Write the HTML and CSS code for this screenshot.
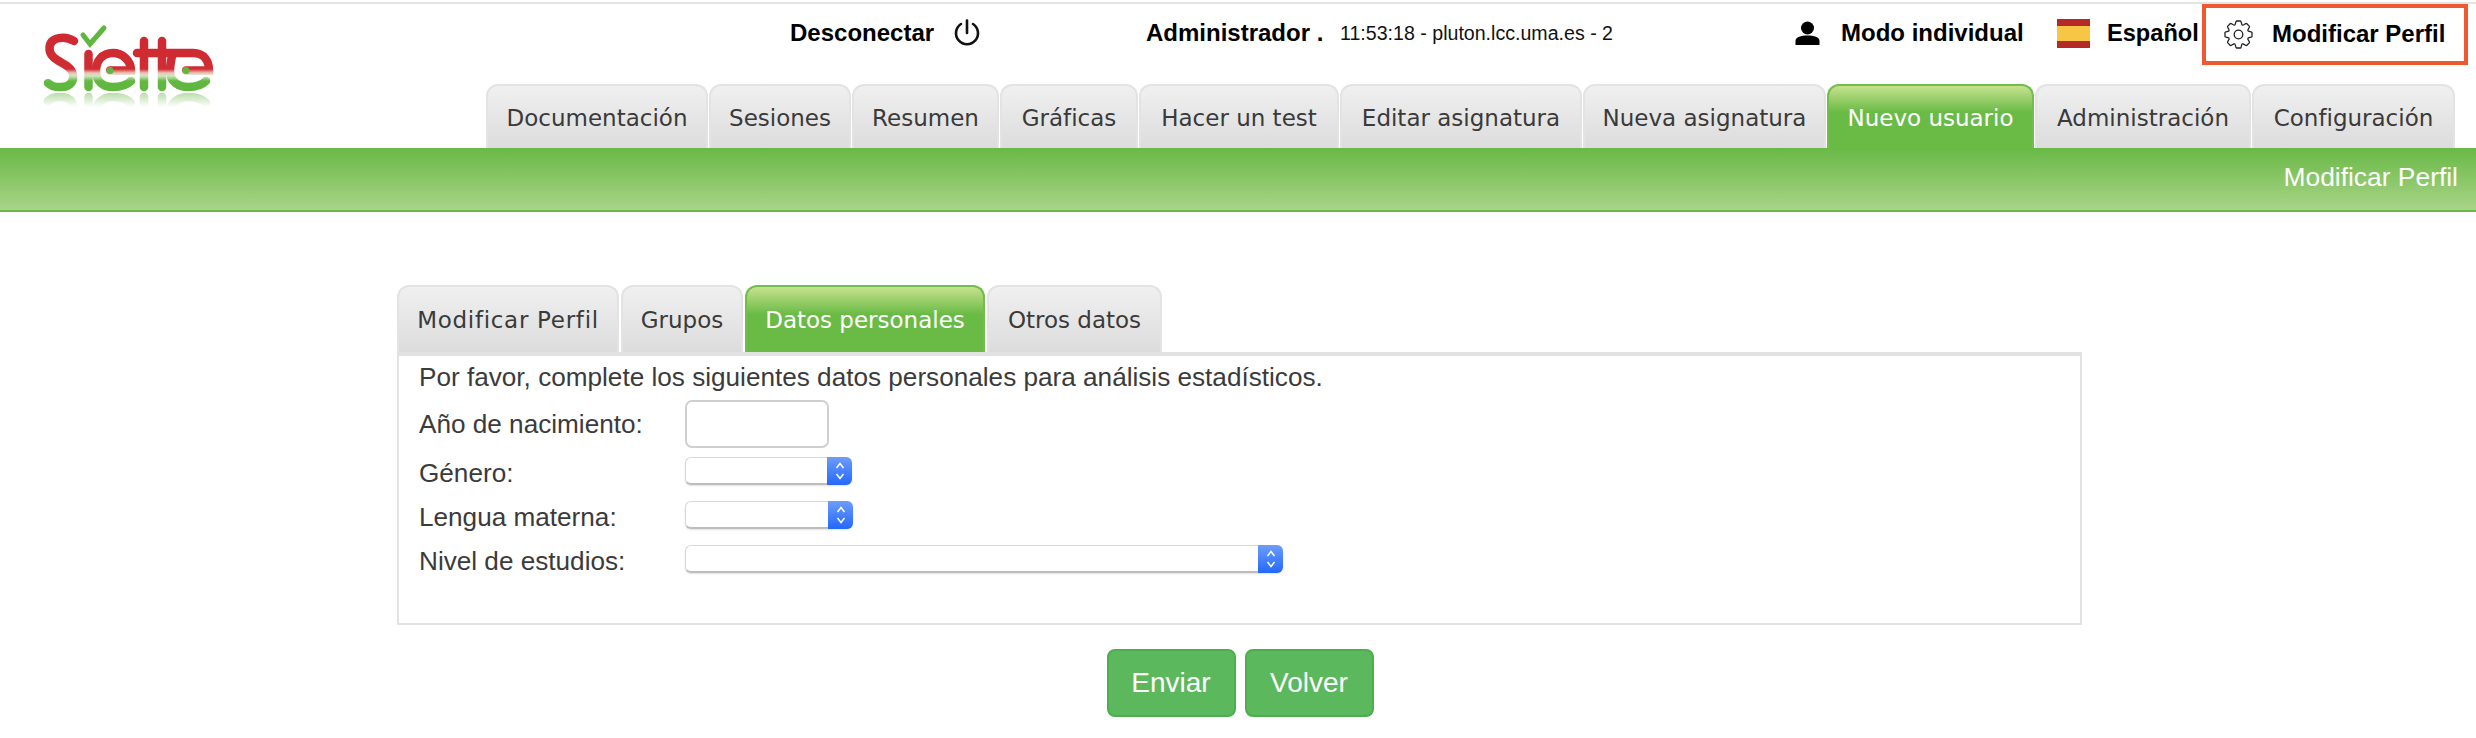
FILE: index.html
```html
<!DOCTYPE html>
<html lang="es">
<head>
<meta charset="utf-8">
<title>Siette - Modificar Perfil</title>
<link rel="stylesheet" href="styles.css">
</head>
<body>
<header class="header">
  <a class="logo" href="#" aria-label="Siette">
    <svg width="200" height="110" viewBox="40 20 200 110" fill="none" stroke-linecap="round">
      <defs>
        <linearGradient id="lg" gradientUnits="userSpaceOnUse" x1="0" y1="40" x2="0" y2="90">
          <stop offset="0" stop-color="#cf2a32"/>
          <stop offset="0.58" stop-color="#d02c34"/>
          <stop offset="0.66" stop-color="#ecc4b8"/>
          <stop offset="0.72" stop-color="#cfe6c0"/>
          <stop offset="0.82" stop-color="#62b840"/>
          <stop offset="1" stop-color="#5fb73f"/>
        </linearGradient>
        <linearGradient id="rg" gradientUnits="userSpaceOnUse" x1="0" y1="91" x2="0" y2="77">
          <stop offset="0" stop-color="#9ccf86" stop-opacity="0.7"/>
          <stop offset="1" stop-color="#9ccf86" stop-opacity="0"/>
        </linearGradient>
        <clipPath id="rc"><rect x="40" y="76" width="200" height="15"/></clipPath>
        <g id="letters">
          <path d="M74 41C66 36 50 36 49.500 48C49 58 60 61 67 66C76 72 76 86 62 87C56 87.500 51 86 48 83"/>
          <path d="M88.500 54V87"/>
          <path d="M110 70.500H131C131 60 122 53 113 53C102 53 96 61 96 71C96 82 104 87 113 87C120 87 127 85 131 81"/>
          <path d="M144 41V87"/>
          <path d="M162 41V87"/>
          <path d="M137 53H193C204 53 209 61 209 70.500H186M172 56C171 61 170 65 170 71C170 82 179 87 188 87C195 87 202 85 206 81"/>
        </g>
      </defs>
      <use href="#letters" stroke="url(#lg)" stroke-width="8.500"/>
      <circle cx="110" cy="70.500" r="3.500" fill="#5fb73f"/>
      <circle cx="186" cy="70.500" r="3.500" fill="#5fb73f"/>
      <path d="M83 35L90 44L104 28" stroke="#5fb73f" stroke-width="5"/>
      <g transform="translate(0 184) scale(1 -1)" clip-path="url(#rc)">
        <use href="#letters" stroke="url(#rg)" stroke-width="8.500"/>
      </g>
    </svg>
  </a>
  <div class="topbar">
    <a class="toplink desconectar" href="#">Desconectar
      <svg width="26" height="28" viewBox="0 0 26 28" fill="none" stroke="#111" stroke-width="2.600" stroke-linecap="round"><path d="M7 5A11 11 0 1 0 19 5"/><path d="M13 1.500V14"/></svg>
    </a>
    <span class="toplink admin">Administrador .</span>
    <span class="clock">11:53:18 - pluton.lcc.uma.es - 2</span>
    <a class="toplink modo" href="#">
      <svg width="25" height="24" viewBox="0 0 25 24" fill="#000"><circle cx="12.500" cy="7" r="6.500"/><path d="M0.500 24V20C0.500 16 6 14.500 12.500 14.500S24.500 16 24.500 20V24Z"/></svg>
      Modo individual
    </a>
    <a class="toplink idioma" href="#"><span class="flag"></span>Español</a>
    <a class="toplink perfil" href="#">
      <svg width="29" height="29" viewBox="-14.500 -14.500 29 29" fill="none" stroke="#222" stroke-width="1.300" stroke-linejoin="round">
        <defs><path id="tooth" d="M-3.830-9.240C-2.800-10-2.900-13.300-2-13.500H2C2.900-13.300 2.800-10 3.830-9.240"/></defs>
        <use href="#tooth"/>
        <use href="#tooth" transform="rotate(45)"/>
        <use href="#tooth" transform="rotate(90)"/>
        <use href="#tooth" transform="rotate(135)"/>
        <use href="#tooth" transform="rotate(180)"/>
        <use href="#tooth" transform="rotate(225)"/>
        <use href="#tooth" transform="rotate(270)"/>
        <use href="#tooth" transform="rotate(315)"/>
        <circle r="4.300"/>
      </svg>
      Modificar Perfil
    </a>
  </div>
  <nav class="tabs main-tabs">
    <a class="tab" href="#">Documentación</a>
    <a class="tab" href="#">Sesiones</a>
    <a class="tab" href="#">Resumen</a>
    <a class="tab" href="#">Gráficas</a>
    <a class="tab" href="#">Hacer un test</a>
    <a class="tab" href="#">Editar asignatura</a>
    <a class="tab" href="#">Nueva asignatura</a>
    <a class="tab active" href="#">Nuevo usuario</a>
    <a class="tab" href="#">Administración</a>
    <a class="tab" href="#">Configuración</a>
  </nav>
</header>
<div class="band">Modificar Perfil</div>
<main class="content">
  <nav class="tabs sub-tabs">
    <a class="tab tab-wide" href="#">Modificar Perfil</a>
    <a class="tab" href="#">Grupos</a>
    <a class="tab active" href="#">Datos personales</a>
    <a class="tab" href="#">Otros datos</a>
  </nav>
  <form class="panel">
    <p class="intro">Por favor, complete los siguientes datos personales para análisis estadísticos.</p>
    <div class="row row-input">
      <label for="anio">Año de nacimiento:</label>
      <input id="anio" class="text-input" type="text">
    </div>
    <div class="row">
      <label for="genero">Género:</label>
      <div class="select sel-genero"><select id="genero"></select><span class="spin"><svg width="10" height="20" viewBox="0 0 10 20" fill="none" stroke="#fff" stroke-width="1.500"><path d="M1.500 7L5 2.500L8.500 7"/><path d="M1.500 13L5 17.500L8.500 13"/></svg></span></div>
    </div>
    <div class="row">
      <label for="lengua">Lengua materna:</label>
      <div class="select sel-lengua"><select id="lengua"></select><span class="spin"><svg width="10" height="20" viewBox="0 0 10 20" fill="none" stroke="#fff" stroke-width="1.500"><path d="M1.500 7L5 2.500L8.500 7"/><path d="M1.500 13L5 17.500L8.500 13"/></svg></span></div>
    </div>
    <div class="row">
      <label for="nivel">Nivel de estudios:</label>
      <div class="select sel-nivel"><select id="nivel"></select><span class="spin"><svg width="10" height="20" viewBox="0 0 10 20" fill="none" stroke="#fff" stroke-width="1.500"><path d="M1.500 7L5 2.500L8.500 7"/><path d="M1.500 13L5 17.500L8.500 13"/></svg></span></div>
    </div>
  </form>
  <div class="actions">
    <button class="btn" type="button">Enviar</button>
    <button class="btn" type="button">Volver</button>
  </div>
</main>
</body>
</html>
```
FILE: styles.css
```css
* { box-sizing: border-box; }
html, body { margin: 0; padding: 0; background: #fff; }
body {
  font-family: "Liberation Sans", Arial, sans-serif;
  color: #3b3b3b;
  width: 2476px;
  height: 738px;
  overflow: hidden;
  padding-top: 2px;
}
a { color: inherit; text-decoration: none; }

.header {
  display: grid;
  grid-template-columns: 486px 1fr;
  grid-template-rows: 80px 64px;
  border-top: 2px solid #e4e4e4;
  height: 146px;
}
.logo { grid-row: 1 / 3; display: block; padding: 16px 0 0 40px; }
.logo svg { display: block; }

.topbar {
  display: flex;
  align-items: center;
  height: 58px;
  padding-left: 304px;
}
.toplink {
  display: flex;
  align-items: center;
  color: #000;
  font-size: 24px;
  font-weight: 700;
  white-space: nowrap;
}
.desconectar { width: 356px; gap: 20px; }
.admin { width: 194px; }
.clock { width: 455px; color: #111; font-size: 19.600px; white-space: nowrap; }
.modo { width: 262px; gap: 21px; }
.idioma { width: 145px; gap: 17px; font-size: 23.600px; }
.flag {
  display: block;
  width: 33px;
  height: 29px;
  background: linear-gradient(#b52a26 0 24%, #f6c644 24% 75%, #b52a26 75%);
}
.perfil {
  width: 266px;
  height: 61px;
  margin-top: 2px;
  gap: 19px;
  padding-left: 18px;
  border: 4px solid #f0582f;
}

.tabs { display: grid; }
.main-tabs {
  grid-template-columns: 222px 142px 147px 138px 200px 242px 243px 207px 216px 203px;
  column-gap: 1px;
}
.tab {
  display: block;
  height: 64px;
  line-height: 64px;
  text-align: center;
  font-family: "DejaVu Sans", sans-serif;
  font-size: 23px;
  color: #3a3a3a;
  white-space: nowrap;
  background: linear-gradient(#f0f0f0, #dcdcdc);
  border: 2px solid #e3e3e3;
  border-bottom: 0;
  border-radius: 12px 12px 0 0;
}
.tab.active {
  color: #fff;
  background: linear-gradient(#c6e28e 0, #6abb46 42%, #6abb46 100%);
  border-color: #72bd4c;
}
.tab-wide { letter-spacing: 0.700px; }

.band {
  height: 64px;
  line-height: 58px;
  padding-right: 18px;
  text-align: right;
  color: #fff;
  font-size: 26.400px;
  background: linear-gradient(#69b946, #a9d488);
  border-bottom: 2px solid #6ab946;
}

.content { margin: 0 394px 0 397px; padding-top: 73px; }
.sub-tabs {
  grid-template-columns: 222px 122px 240px 175px;
  column-gap: 2px;
}
.sub-tabs .tab { height: 67px; line-height: 67px; }

.panel {
  border: 2px solid #e2e2e2;
  border-top-width: 4px;
  height: 273px;
  padding: 8px 0 0 20px;
}
.intro { margin: 0 0 10px; font-size: 26.150px; line-height: 26px; }
.row { display: flex; align-items: center; font-size: 26.150px; min-height: 44px; }
.row label { width: 266px; flex: none; padding-top: 4px; }
.row-input { height: 48px; margin-bottom: 1px; }
.row-input label { padding-top: 0; }
.text-input {
  width: 144px;
  height: 48px;
  border: 2px solid #cfcfcf;
  border-radius: 7px;
  background: #fff;
}
.select {
  display: flex;
  height: 28px;
  border: 1px solid #d8d8d8;
  border-bottom: 2px solid #bdbdbd;
  border-right: 0;
  border-radius: 6px;
  background: #fff;
  box-shadow: 0 1px 2px rgba(0, 0, 0, 0.12);
}
.select select {
  flex: 1;
  min-width: 0;
  border: 0;
  background: transparent;
  appearance: none;
}
.sel-genero { width: 167px; }
.sel-lengua { width: 168px; }
.sel-nivel { width: 598px; }
.spin {
  display: flex;
  align-items: center;
  justify-content: center;
  width: 25px;
  margin: -1px 0 -2px;
  border-radius: 0 6px 6px 0;
  background: linear-gradient(#6d9dfa, #2468fb);
}

.actions { display: flex; justify-content: center; gap: 9px; margin: 24px 0 0 1px; }
.btn {
  width: 129px;
  height: 68px;
  padding: 0;
  font-family: inherit;
  font-size: 28px;
  color: #fff;
  background: #5cb85c;
  border: 2px solid #4cae4c;
  border-radius: 8px;
}
```
